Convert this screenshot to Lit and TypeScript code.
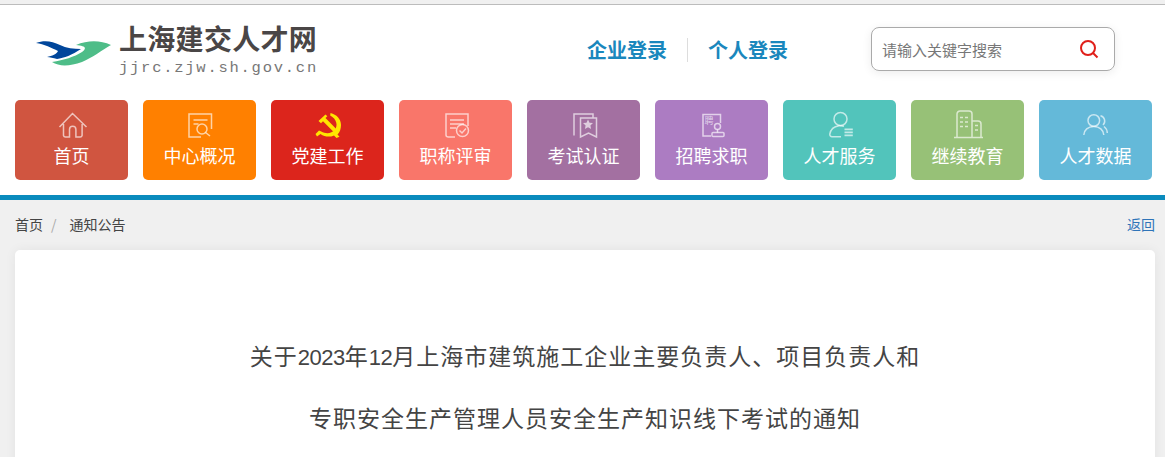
import { LitElement, html, css, svg } from "lit";
import { customElement } from "lit/decorators.js";

const icons = [
  svg`<path d="M3.5 17 16.5 3.5 30.5 17M7.5 14v11.5a2 2 0 0 0 2 1.5h4V19.5a3.2 3.2 0 0 1 6.4 0V27h4.2a2 2 0 0 0 2-1.5V14"/>`,
  svg`<path d="M17 27H5V4h22.5v15"/><path d="M9.500 10h14M9.500 14h5"/><circle cx="18" cy="19" r="5"/><path d="m21.500 22.500 4.500 3.500"/>`,
  svg``,
  svg`<path d="M15 27H8.500c-1.500 0-2.500-1-2.500-2V4h22v12"/><path d="M10 10h14M10 14h14M10 18h6"/><circle cx="22.500" cy="20.500" r="6"/><path d="m19.500 20.500 2.500 2.500 4-4.500"/>`,
  svg`<path d="M6 25.500V4h19v3.500"/><path d="M12.500 8H28.500v19l-8-4-8 4z"/><path class="fill" d="m20 9.500 1.500 3.200 3.500.4-2.600 2.400.7 3.500-3.100-1.800-3.100 1.800.7-3.500-2.600-2.400 3.500-.4z"/>`,
  svg`<path d="M15 26H7V4.500h17.500V13"/><text x="8.500" y="14" class="tiny">聘</text><circle cx="21.500" cy="16.500" r="3"/><path d="M21.500 19.500v3"/><rect x="16" y="22.500" width="12" height="4" rx="1"/>`,
  svg`<circle cx="16.500" cy="9" r="6.500"/><path d="M17 26.700H8a2.200 2.200 0 0 1-2.200-2.500C6.500 20 10 16.500 15 15.800a10 10 0 0 1 5 .5"/><path class="thick" d="M20.500 19.300h8.300M20.500 22.300h8.300M20.500 25.300h8.300"/>`,
  svg`<path d="M5 27V4a3 3 0 0 1 3-3h9a3 3 0 0 1 3 3v23M20 11h6a3 3 0 0 1 3 3v13M2 27.500h29"/><path d="M8 7.500h3M13 7.500h3M8 12h3M13 12h3M8 16.500h3M13 16.500h3M23 15.500h3M23 20h3"/>`,
  svg`<circle cx="13.800" cy="10.500" r="5.800"/><path d="M3.800 25C4 20 8 16.500 13.800 16.500S23.500 20 23.800 25M20.500 5.800a5.400 5.400 0 0 1 2.500 9.200M24 16.500c2 1.500 3.200 3.500 3.300 6.500"/>`,
];

const nav: [string, string][] = [
  ["首页", "#d05540"],
  ["中心概况", "#ff8000"],
  ["党建工作", "#dc251c"],
  ["职称评审", "#f9766a"],
  ["考试认证", "#a370a1"],
  ["招聘求职", "#ac7cc2"],
  ["人才服务", "#52c4bb"],
  ["继续教育", "#97c177"],
  ["人才数据", "#64b9d9"],
];

@customElement("app-root")
export class AppRoot extends LitElement {
  static styles = css`
    :host {
      display: block;
      height: 457px;
      overflow: hidden;
      background: #f0f0f0;
      font-family: "Noto Sans CJK SC", "Liberation Sans", sans-serif;
      color: #444;
    }
    .topline {
      height: 4px;
      background: #f0f0f0;
      border-bottom: 1px solid #bcbcbc;
    }
    .head {
      height: 95px;
      box-sizing: border-box;
      background: #fff;
      display: flex;
      align-items: flex-start;
    }
    .logo {
      width: 587px;
      box-sizing: border-box;
      padding: 17px 0 0 36px;
      display: flex;
      gap: 8px;
    }
    .mark { margin-top: 14px; flex: none; }
    .brand { display: flex; flex-direction: column; }
    .brand b {
      font-size: 28px;
      line-height: 32px;
      font-weight: 700;
      letter-spacing: 0.300px;
      color: #4a4646;
      white-space: nowrap;
    }
    .brand span {
      font-family: "Liberation Mono", monospace;
      font-size: 15.500px;
      line-height: 20px;
      letter-spacing: 1.750px;
      color: #777;
      margin-top: 4px;
      white-space: nowrap;
    }
    .login {
      width: 284px;
      flex: none;
      display: flex;
      align-items: center;
      margin-top: 33px;
      font-size: 20px;
      line-height: 24px;
      font-weight: 700;
      color: #1a87bd;
    }
    .login i {
      width: 1px;
      height: 24px;
      background: #ddd;
      margin: 0 20px;
    }
    .search {
      width: 244px;
      flex: none;
      height: 44px;
      margin-top: 22px;
      box-sizing: border-box;
      border: 1px solid #aaa;
      border-radius: 8px;
      box-shadow: 0 2px 10px rgba(0, 0, 0, 0.08);
      display: flex;
      align-items: center;
      justify-content: space-between;
      padding: 0 15px 0 10px;
      font-size: 15px;
      color: #777;
    }
    nav {
      background: #fff;
      display: flex;
      gap: 15px;
      padding: 0 0 15px 15px;
    }
    .item {
      width: 113px;
      flex: none;
      height: 80px;
      border-radius: 5px;
      color: #fff;
      font-size: 18px;
      line-height: 26px;
      display: flex;
      flex-direction: column;
      align-items: center;
      box-sizing: border-box;
      padding-top: 10px;
    }
    .item svg { display: block; }
    .item svg.stroke { fill: none; stroke: rgba(255, 255, 255, 0.65); stroke-width: 1.500; }
    .item .fill { fill: rgba(255, 255, 255, 0.65); stroke: none; }
    .item .thick { stroke-width: 1.800; }
    .item .tiny { font-size: 9px; fill: rgba(255, 255, 255, 0.65); stroke: none; }
    .bar { height: 5px; background: #0a8bbd; }
    .crumbs {
      display: flex;
      align-items: center;
      height: 50px;
      padding: 0 10px 2px 15px;
      box-sizing: border-box;
      font-size: 14px;
      color: #444;
    }
    .crumbs em { font-style: normal; color: #aaa; margin: 0 13px 0 8px; }
    .crumbs a { margin-left: auto; color: #2f74b8; }
    .card {
      margin: 0 10px 0 15px;
      background: #fff;
      border-radius: 5px;
      box-shadow: 0 0 12px rgba(0, 0, 0, 0.06);
      padding-top: 74px;
      height: 400px;
      text-align: center;
      font-size: 23px;
      line-height: 62px;
      letter-spacing: 1px;
      color: #444;
    }
    .card div { white-space: nowrap; height: 62px; }
    .num {
      font-family: "Liberation Sans", sans-serif;
      font-size: 22px;
      line-height: 1;
      letter-spacing: -0.500px;
    }
  `;

  private party() {
    return html`<svg width="32" height="32" viewBox="0 0 32 32" fill="#ffe600">
      <path d="M18.500 3c6 1.500 10.500 6 10.500 12 0 3.500-1 7-3.500 9.500l2 2.200-3 1.300-2.500-2.600c-4.500 2-9.500 1.400-13.500-1.500L5 26.500 3.500 24l3.500-3.500 2.200 1c5 2.800 10.500 2 13.500-1.500 3.500-4.500 2-11-4.500-14.500z"/>
      <path d="M6.500 11 13.500 4.500l1.800 1.700-1.800 1.800 11 11.300-2.800 2.700L11 11.200 9 13.200z"/>
    </svg>`;
  }

  render() {
    return html`
      <div class="topline"></div>
      <header class="head">
        <div class="logo">
          <svg class="mark" width="75" height="30" viewBox="36 34 75 30">
            <path fill="#4ebd88" d="M111 43C100 38 88 38 76 43c8 1 12 2 6 7-8 5-18 8-30 10 8 5 18 4 30 0 10-4 20-12 29-17z"/>
            <path fill="#00469b" d="M36 41c8-3 16-2 24 2 6 3 14 4 21 4-9 6-17 9-24 10-4-1-7-2-10-2 5-1 10-3 11-6-6-3-14-7-22-8z"/>
          </svg>
          <div class="brand">
            <b>上海建交人才网</b>
            <span>jjrc.zjw.sh.gov.cn</span>
          </div>
        </div>
        <div class="login"><span>企业登录</span><i></i><span>个人登录</span></div>
        <div class="search">
          <span>请输入关键字搜索</span>
          <svg width="20" height="20" viewBox="0 0 20 20" fill="none" stroke="#e01f1a" stroke-width="2">
            <circle cx="9" cy="9" r="7"/><path d="m14 14 4.500 4.500"/>
          </svg>
        </div>
      </header>
      <nav>
        ${nav.map(
          ([label, color], i) => html`<div class="item" style="background:${color}">
            ${i === 2
              ? this.party()
              : html`<svg class="stroke" width="32" height="32" viewBox="0 0 32 32">${icons[i]}</svg>`}
            <span>${label}</span>
          </div>`
        )}
      </nav>
      <div class="bar"></div>
      <div class="crumbs"><span>首页</span><em>/</em><span>通知公告</span><a>返回</a></div>
      <section class="card">
        <div>关于<span class="num">2023</span>年<span class="num">12</span>月上海市建筑施工企业主要负责人、项目负责人和</div>
        <div>专职安全生产管理人员安全生产知识线下考试的通知</div>
      </section>
    `;
  }
}
